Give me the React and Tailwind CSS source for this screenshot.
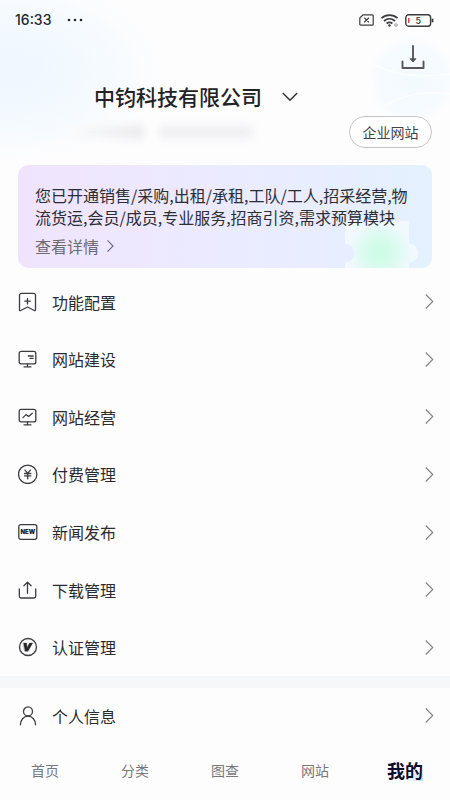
import React from 'react';

const iconProps = {
  width: 20,
  height: 20,
  viewBox: '0 0 20 20',
  fill: 'none',
  stroke: '#3c3c40',
  strokeWidth: 1.3,
  strokeLinecap: 'round',
  strokeLinejoin: 'round',
  'aria-hidden': true,
};

const FeatureIcon = () => (
  <svg {...iconProps}>
    <path d="M1.5 18V3.3A2 2 0 0 1 3.5 1.3h12a2 2 0 0 1 2 2V18c0 .7-.7.9-1.2.5L9.5 15l-6.8 3.5c-.5.4-1.2.2-1.2-.5ZM9.5 6.5v5.4M6.8 9.2h5.4" />
  </svg>
);
const SiteIcon = () => (
  <svg {...iconProps}>
    <rect x="1.2" y="2.3" width="16.6" height="12.6" rx="2" />
    <path d="M9.5 15v2.6M6 17.8h7M10.3 7h4.9M12 9.3h3.2" />
  </svg>
);
const OperateIcon = () => (
  <svg {...iconProps}>
    <rect x="1.2" y="2.3" width="16.6" height="12.6" rx="2" />
    <path d="M9.5 15v2.6M6 17.8h7M5 10.6l3-3 2.6 2L14.3 6.3" />
  </svg>
);
const PayIcon = () => (
  <svg {...iconProps}>
    <circle cx="9.7" cy="10.3" r="9.2" />
    <path d="m7 6.100 2.700 3 2.700-3M9.700 9.300v5.500M6.600 9.500h6.200M6.600 11.900h6.200" />
  </svg>
);
const NewsIcon = () => (
  <svg {...iconProps}>
    <rect x=".8" y="2.7" width="18" height="14.6" rx="2" />
    <text x="9.8" y="12.4" textAnchor="middle" fontSize="6" fontWeight="900" fill="#222" stroke="none" fontFamily="Inter, sans-serif">NEW</text>
  </svg>
);
const UploadIcon = () => (
  <svg {...iconProps}>
    <path d="M1.3 9v7.3c0 1 .7 1.7 1.700 1.700h13c1 0 1.700-.7 1.700-1.700V9M9.500 13.300V2.200M5.900 5.700l3.600-3.600 3.600 3.600" />
  </svg>
);
const VerifyIcon = () => (
  <svg {...iconProps}>
    <circle cx="10" cy="10" r="8.5" />
    <path d="M5.500 6h3.200l.4 4.600L11.500 6h3.200l-4.600 8.300H7Z" fill="#2a2a2a" stroke="#2a2a2a" strokeWidth=".3" />
  </svg>
);
const UserIcon = () => (
  <svg {...iconProps}>
    <circle cx="10" cy="5.4" r="4.5" />
    <path d="M2.400 18.800c.3-5.200 3.400-8.700 7.600-8.700s7.300 3.500 7.600 8.700" />
  </svg>
);

const Chevron = ({ className, w, h, sw }) => (
  <svg className={className} width={w} height={h} viewBox="0 0 8 14" fill="none" stroke="currentColor" strokeWidth={sw} aria-hidden="true">
    <path d="m.5.5 6.500 6.500-6.500 6.500" />
  </svg>
);

const menu = [
  ['功能配置', FeatureIcon],
  ['网站建设', SiteIcon],
  ['网站经营', OperateIcon],
  ['付费管理', PayIcon],
  ['新闻发布', NewsIcon],
  ['下载管理', UploadIcon],
  ['认证管理', VerifyIcon],
];

const tabs = ['首页', '分类', '图查', '网站', '我的'];

function Row({ label, Icon }) {
  return (
    <button type="button" className="flex w-full items-center pr-4 pl-[18px] text-left text-base text-[#2b2b2e]">
      <Icon />
      <span className="ml-[14px] flex-1">{label}</span>
      <Chevron className="text-[#85858a]" w={9} h={15} sw={1.1} />
    </button>
  );
}

function StatusBar() {
  return (
    <div className="flex h-10 items-center pr-4 pl-[15px] text-[#28282a]">
      <span className="font-[Inter,sans-serif] text-sm font-medium">16:33</span>
      <svg className="ml-4" width="17" height="4" viewBox="0 0 17 4" fill="currentColor" aria-hidden="true">
        <circle cx="2" cy="2" r="1.3" />
        <circle cx="8" cy="2" r="1.3" />
        <circle cx="14" cy="2" r="1.3" />
      </svg>
      <div className="ml-auto flex items-center gap-[7px]">
        <svg width="15" height="12" viewBox="0 0 15 12" fill="none" stroke="#3c3c3e" strokeWidth="1.2" aria-hidden="true">
          <path d="M4 .8h9.200c.6 0 1 .4 1 1v8.400c0 .6-.4 1-1 1H1.800c-.6 0-1-.4-1-1V4ZM5.300 3.800l4.600 4.400M9.900 3.800 5.300 8.200" />
        </svg>
        <svg width="17" height="13" viewBox="0 0 17 13" fill="none" stroke="#3c3c3e" strokeWidth="1.7" aria-hidden="true">
          <path d="M.5 4.200c4.600-4.200 11.400-4.200 16 0M3 7c3.300-3 7.700-3 11 0M5.600 9.500c1.800-1.500 4-1.500 5.800 0" />
          <circle cx="8.500" cy="11.500" r="1.200" fill="#3c3c3e" stroke="none" />
          <circle cx="15" cy="11" r="1.300" strokeWidth=".8" stroke="#88888a" />
        </svg>
        <svg width="29" height="13" viewBox="0 0 29 13" fill="none" role="img" aria-label="电量 5%">
          <rect x=".8" y=".8" width="24.8" height="11.4" rx="2.8" stroke="#3c3c3e" strokeWidth="1.4" />
          <path d="M27.500 4.700v3.600" stroke="#3c3c3e" strokeWidth="1.8" />
          <path d="M3.800 4v5" stroke="#d13a40" strokeWidth="1.4" />
          <text x="13.2" y="9.8" textAnchor="middle" fontSize="9" fontWeight="500" fill="#333" fontFamily="Inter, sans-serif">5</text>
        </svg>
      </div>
    </div>
  );
}

export default function App() {
  return (
    <div className="relative isolate flex min-h-screen flex-col overflow-hidden bg-[#fdfdfe] font-['Noto_Sans_CJK_SC',sans-serif]">
      <div className="absolute -top-5 -left-[150px] -z-10 h-[180px] w-[310px] rounded-full bg-[radial-gradient(closest-side,#eef6ff,#f4faff_60%,#fdfdfe00)]" />
      <svg className="absolute top-[34px] right-0 -z-10" width="84" height="92" viewBox="0 0 84 92" fill="none" aria-hidden="true">
        <defs>
          <radialGradient id="orb">
            <stop offset="0" stopColor="#f3faff" />
            <stop offset=".7" stopColor="#f6fbff" />
            <stop offset="1" stopColor="#fdfdfe" />
          </radialGradient>
        </defs>
        <circle cx="46" cy="46" r="46" fill="url(#orb)" />
        <path d="M4 28c22 14 48 16 80 12M10 78c20-16 46-22 74-18" stroke="#fdfeff" strokeWidth="1.5" />
      </svg>

      <StatusBar />

      <header className="pr-6 pl-[94px]">
        <div className="flex h-[34px] items-center justify-end">
          <button type="button" aria-label="下载">
            <svg width="26" height="26" viewBox="0 0 26 26" fill="none" stroke="#58585c" strokeWidth="1.9" strokeLinejoin="round" strokeLinecap="round" aria-hidden="true">
              <path d="M2.500 17.500V24h21v-6.500M13 2v15" />
              <path d="m10.300 15 2.700 3 2.700-3Z" fill="#58585c" strokeWidth="1" />
            </svg>
          </button>
        </div>
        <button type="button" className="flex h-[46px] items-center gap-5 text-[21px] font-medium text-[#232326]">
          中钧科技有限公司
          <svg width="16" height="10" viewBox="0 0 16 10" fill="none" stroke="#333336" strokeWidth="1.5" aria-hidden="true">
            <path d="m.8 1 7.200 7.200L15.200 1" />
          </svg>
        </button>
      </header>
      <div className="-mt-1 flex h-8 items-center pr-[18px] pl-[72px]">
        <div className="flex gap-4 blur-[4px]" aria-hidden="true">
          <div className="h-3 w-[72px] bg-linear-to-r from-[#fafafb] to-[#e8e8ea]" />
          <div className="h-3 w-[92px] bg-[#eeeef0]" />
        </div>
        <button type="button" className="ml-auto h-8 w-[83px] rounded-full border border-[#c6c6c9] bg-white text-sm text-[#444448]">
          企业网站
        </button>
      </div>

      <section className="relative isolate mx-[18px] mt-[17px] overflow-hidden rounded-[10px] bg-linear-to-r from-[#f0e4fd] via-[#ebebff] to-[#e4f1ff] px-[17px] pt-[19px] pb-[11px]">
        <svg className="absolute right-0 bottom-0 -z-10" width="90" height="50" viewBox="0 0 90 50" aria-hidden="true">
          <defs>
            <radialGradient id="glow" gradientUnits="userSpaceOnUse" cx="38" cy="34" r="32">
              <stop offset="0" stopColor="#ccfde6" />
              <stop offset=".35" stopColor="#d4fbea" />
              <stop offset="1" stopColor="#f1f9ff" />
            </radialGradient>
          </defs>
          <path d="M3 3h64v22.500a9.500 9.500 0 0 1 0 19V50H3v-5.500a9.500 9.500 0 0 0 0-19Z" fill="url(#glow)" />
        </svg>
        <p className="text-base leading-[22px] text-[#2d2d34]">
          您已开通销售/采购,出租/承租,工队/工人,招采经营,物流货运,会员/成员,专业服务,招商引资,需求预算模块
        </p>
        <a href="#details" className="mt-[7px] flex items-center gap-2 text-base leading-[22px] text-[#6b6b73]">
          查看详情
          <Chevron w={7} h={12} sw={1.3} />
        </a>
      </section>

      <nav aria-label="管理" className="mt-[5px] grid h-[403px] auto-rows-fr">
        {menu.map(([label, Icon]) => (
          <Row key={label} label={label} Icon={Icon} />
        ))}
      </nav>

      <div className="grid h-[67px] border-t-[12px] border-[#f6f7f9]">
        <Row label="个人信息" Icon={UserIcon} />
      </div>

      <nav aria-label="主导航" className="mt-auto grid h-14 grid-cols-5 pb-1 text-sm text-[#77777c]">
        {tabs.map((tab, i) =>
          i === tabs.length - 1 ? (
            <button key={tab} type="button" aria-current="page" className="text-lg font-bold text-[#0c0d2c]">
              <span className="inline-block bg-[linear-gradient(100deg,transparent_55%,#b9dcff)] bg-size-[100%_8px] bg-position-[0_17px] bg-no-repeat">{tab}</span>
            </button>
          ) : (
            <button key={tab} type="button">{tab}</button>
          )
        )}
      </nav>
    </div>
  );
}
